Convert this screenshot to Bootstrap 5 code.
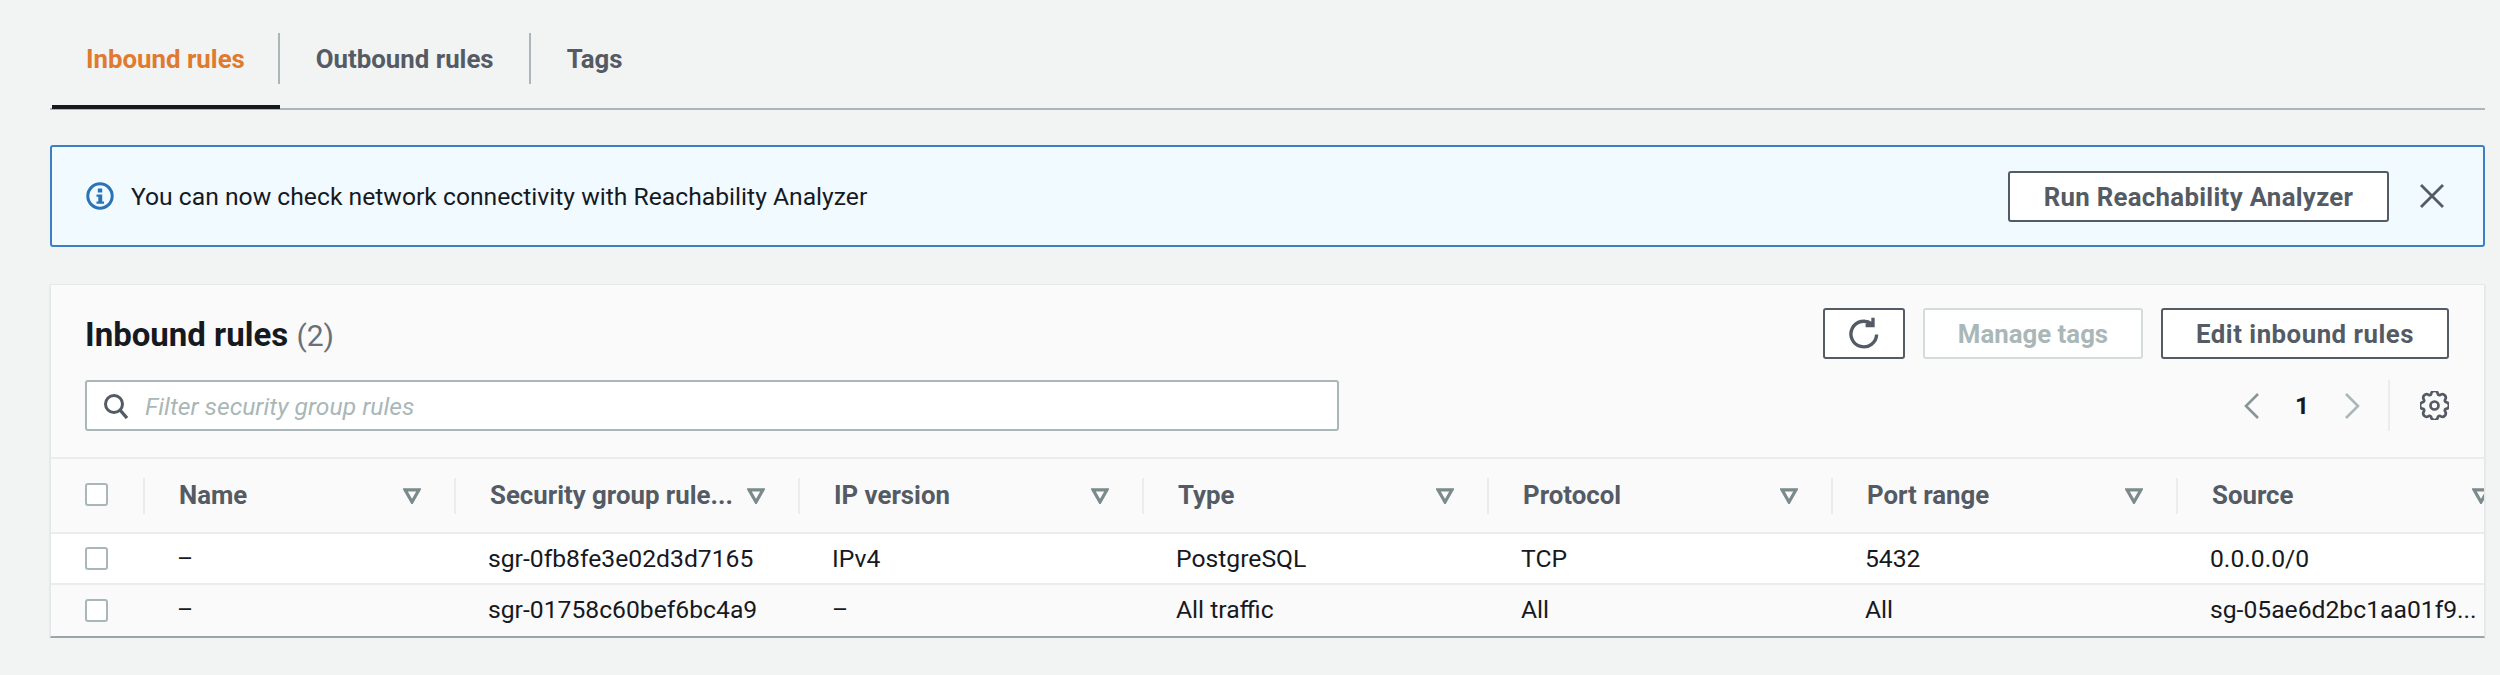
<!DOCTYPE html>
<html lang="en">
<head>
  <meta charset="UTF-8" />
  <meta name="viewport" content="width=device-width, initial-scale=1" />
  <title>Inbound rules</title>
  <link href="https://cdn.jsdelivr.net/npm/bootstrap@5.3.0/dist/css/bootstrap.min.css" rel="stylesheet">
  <style>
    body { background-color: #f2f3f3; color: #16191f; font-family: Roboto, "Liberation Sans", sans-serif; font-size: 24.7px; overflow: hidden; }
    .page-wrap { padding: 0 15px 0 50px; }

    .rule-tabs { border-bottom: 2px solid #aab7b8; height: 110px; padding-left: 2px; }
    .rule-tab { height: 108px; padding-top: 33px; color: #545b64; font-size: 25.8px; font-weight: 700; text-decoration: none; }
    .rule-tab span { display: flex; align-items: center; height: 51px; padding: 2px 35px 0 36px; border-right: 2px solid #aab7b8; }
    .rule-tab.last span { border-right: 0; }
    .rule-tab.on { color: #e07a2f; border-bottom: 4px solid #16191f; margin-bottom: -1px; height: 109px; }
    .rule-tab.on span { padding: 2px 33px 0 34px; }

    .info-box { margin: 35px 0 37px; height: 102px; padding: 0 38px 0 34px; background: #f1faff; border: 2px solid #3b7fc4; border-radius: 3px; color: #16191f; }
    .info-box .msg { margin-left: 17px; padding-top: 2px; }
    .x-btn { width: 26px; height: 26px; border: 0; background: none; padding: 0; margin-left: 30px; color: #545b64; }

    .aws-btn { height: 51px; padding: 3px 0 0; background: #fff; border: 2px solid #545b64; border-radius: 3px; color: #545b64; font-size: 25.8px; font-weight: 700; line-height: 1; }
    .aws-btn:disabled { background: #fff; border-color: #d5dbdb; color: #aab7b8; opacity: 1; }
    .aws-btn.icon-only { width: 82px; padding: 0; }
    .run-btn { width: 381px; letter-spacing: .3px; }
    .tags-btn { width: 220px; }
    .edit-btn { width: 288px; letter-spacing: .5px; }
    .top-actions { gap: 18px; }

    .rules-panel { height: 354px; background: #fafafa; border: 1px solid #e4e8e8; border-bottom: 2px solid #9aa6a8; box-shadow: 0 1px 2px rgba(0,0,0,.1); border-radius: 0; overflow: hidden; }
    .panel-top { height: 174px; padding: 23px 35px 0 34px; border-bottom: 2px solid #eaeded; }
    .panel-title { font-size: 33px; font-weight: 700; margin: 0; padding-top: 2px; }
    .panel-title span { font-size: 30px; font-weight: 400; color: #687078; }
    .search-row { margin-top: 21px; }
    .search-box { width: 1254px; height: 51px; background: #fff; border: 2px solid #aab7b8; border-radius: 3px; padding-left: 16px; }
    .search-box input { border: 0; padding: 2px 0 0 16px; height: 46px; background: transparent; font-size: 24.7px; font-style: italic; box-shadow: none; }
    .search-box input::placeholder { color: #aab7b8; opacity: 1; }
    .pager-num { width: 82px; text-align: center; font-weight: 700; }
    .pager-rule { width: 2px; height: 51px; background: #eaeded; margin: 0 30px 0 27px; }

    .rules-table { table-layout: fixed; width: 2472px; margin: 0; color: #16191f; --bs-table-bg: transparent; }
    .rules-table th, .rules-table td { padding: 0 0 0 34px; vertical-align: middle; border: 0; overflow: hidden; white-space: nowrap; }
    .rules-table thead th { height: 74px; background: #fafafa; color: #545b64; font-size: 25.8px; font-weight: 700; border-bottom: 2px solid #eaeded; }
    .rules-table tbody tr:first-child td { height: 51px; background: #fff; border-bottom: 2px solid #eaeded; }
    .rules-table tbody tr:last-child td { height: 51px; background: #fafafa; }
    .head-cell { display: flex; align-items: center; justify-content: space-between; height: 36px; padding-right: 33px; margin-left: -34px; padding-left: 34px; border-left: 2px solid #eaeded; }
    .rules-table .form-check-input { width: 23px; height: 23px; margin: 0; float: none; display: block; background-color: #fff; border: 2px solid #aab7b8; border-radius: 3px; }
    .rules-table thead .form-check-input { margin-top: -3px; }
  </style>
</head>
<body>
  <div class="page-wrap">
    <div class="rule-tabs d-flex">
      <a class="rule-tab on" href="#"><span>Inbound rules</span></a>
      <a class="rule-tab" href="#"><span>Outbound rules</span></a>
      <a class="rule-tab last" href="#"><span>Tags</span></a>
    </div>

    <div class="info-box d-flex align-items-center">
      <svg width="28" height="28" viewBox="0 0 28 28">
        <circle cx="14" cy="14" r="12.2" fill="none" stroke="#2a73b8" stroke-width="3"/>
        <rect x="11.8" y="6.5" width="4.4" height="4" fill="#2a73b8"/>
        <path d="M10.5 12.5h5.7v7h1.8v2.2h-7.5v-2.2h1.8v-4.8h-1.8z" fill="#2a73b8"/>
      </svg>
      <div class="msg flex-grow-1">You can now check network connectivity with Reachability Analyzer</div>
      <button class="aws-btn run-btn" type="button">Run Reachability Analyzer</button>
      <button class="x-btn" type="button" aria-label="Close">
        <svg class="d-block" width="26" height="26" viewBox="0 0 26 26"><path d="M2 2l22 22M24 2L2 24" fill="none" stroke="currentColor" stroke-width="2.8"/></svg>
      </button>
    </div>

    <div class="card rules-panel">
      <div class="panel-top">
        <div class="d-flex align-items-center justify-content-between">
          <h2 class="panel-title">Inbound rules <span>(2)</span></h2>
          <div class="d-flex top-actions">
            <button class="aws-btn icon-only" type="button" aria-label="Refresh">
              <svg class="d-block mx-auto" width="36" height="36" viewBox="0 0 16 16"><path d="M13.6 8.2a5.7 5.7 0 1 1-2.1-4.6M12 .8v3.4H8.7" fill="none" stroke="#545b64" stroke-width="1.5"/></svg>
            </button>
            <button class="aws-btn tags-btn" type="button" disabled>Manage tags</button>
            <button class="aws-btn edit-btn" type="button">Edit inbound rules</button>
          </div>
        </div>
        <div class="search-row d-flex align-items-center justify-content-between">
          <div class="search-box d-flex align-items-center">
            <svg width="26" height="26" viewBox="0 0 26 26" class="flex-shrink-0"><circle cx="11" cy="11" r="8.5" fill="none" stroke="#545b64" stroke-width="3"/><path d="M17 17l7 8" stroke="#545b64" stroke-width="3.4" fill="none"/></svg>
            <input class="form-control" type="text" placeholder="Filter security group rules">
          </div>
          <div class="d-flex align-items-center">
            <svg width="18" height="28" viewBox="0 0 18 28"><path d="M15 2L3 14l12 12" fill="none" stroke="#879596" stroke-width="2.6"/></svg>
            <div class="pager-num">1</div>
            <svg width="18" height="28" viewBox="0 0 18 28"><path d="M3 2l12 12L3 26" fill="none" stroke="#aab7b8" stroke-width="2.6"/></svg>
            <div class="pager-rule"></div>
            <svg width="29" height="29" viewBox="0 0 16 16"><path d="M9.796 1.343c-.527-1.79-3.065-1.79-3.592 0l-.094.319a.873.873 0 0 1-1.255.52l-.292-.16c-1.64-.892-3.433.902-2.54 2.541l.159.292a.873.873 0 0 1-.52 1.255l-.319.094c-1.79.527-1.79 3.065 0 3.592l.319.094a.873.873 0 0 1 .52 1.255l-.16.292c-.892 1.64.901 3.434 2.541 2.54l.292-.159a.873.873 0 0 1 1.255.52l.094.319c.527 1.79 3.065 1.79 3.592 0l.094-.319a.873.873 0 0 1 1.255-.52l.292.16c1.64.893 3.434-.902 2.54-2.541l-.159-.292a.873.873 0 0 1 .52-1.255l.319-.094c1.79-.527 1.79-3.065 0-3.592l-.319-.094a.873.873 0 0 1-.52-1.255l.16-.292c.893-1.64-.902-3.433-2.541-2.54l-.292.159a.873.873 0 0 1-1.255-.52l-.094-.319z" fill="none" stroke="#545b64" stroke-width="1.5"/><circle cx="8" cy="8" r="2.2" fill="none" stroke="#545b64" stroke-width="1.5"/></svg>
          </div>
        </div>
      </div>

      <table class="table rules-table">
        <colgroup>
          <col style="width:92px"><col style="width:311px"><col style="width:344px"><col style="width:344px"><col style="width:345px"><col style="width:344px"><col style="width:345px"><col style="width:347px">
        </colgroup>
        <thead>
          <tr id="headRow"><th class="pick"><input class="form-check-input" type="checkbox" aria-label="Select all"></th></tr>
        </thead>
        <tbody id="ruleRows"></tbody>
      </table>
    </div>
  </div>

  <script src="https://cdn.jsdelivr.net/npm/bootstrap@5.3.0/dist/js/bootstrap.bundle.min.js"></script>
  <script>
    const columns = ["Name", "Security group rule...", "IP version", "Type", "Protocol", "Port range", "Source"];
    const rules = [
      ["–", "sgr-0fb8fe3e02d3d7165", "IPv4", "PostgreSQL", "TCP", "5432", "0.0.0.0/0"],
      ["–", "sgr-01758c60bef6bc4a9", "–", "All traffic", "All", "All", "sg-05ae6d2bc1aa01f9..."]
    ];
    const filterIcon = '<svg width="18" height="16" viewBox="0 0 18 16" class="flex-shrink-0"><path d="M2 1.8h14L9 14z" fill="none" stroke="#7b8a8b" stroke-width="3.2"/></svg>';

    const headRow = document.getElementById("headRow");
    columns.forEach(name => {
      const th = document.createElement("th");
      th.innerHTML = `<div class="head-cell"><span>${name}</span>${filterIcon}</div>`;
      headRow.appendChild(th);
    });

    const ruleRows = document.getElementById("ruleRows");
    rules.forEach(rule => {
      const row = document.createElement("tr");
      row.innerHTML = `<td class="pick"><input class="form-check-input" type="checkbox" aria-label="Select row"></td>` +
        rule.map(value => `<td>${value}</td>`).join("");
      ruleRows.appendChild(row);
    });
  </script>
</body>
</html>
